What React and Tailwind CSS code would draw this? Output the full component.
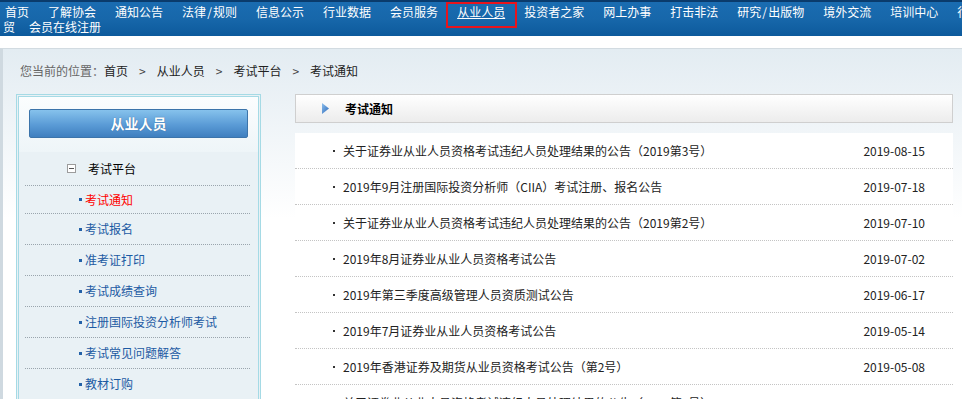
import React from 'react';

const NAV = ['首页', '了解协会', '通知公告', '法律/规则', '信息公示', '行业数据', '会员服务', '从业人员', '投资者之家', '网上办事', '打击非法', '研究/出版物', '境外交流', '培训中心', '行'];

const SIDE = [
  { label: '考试通知', active: true },
  { label: '考试报名' },
  { label: '准考证打印' },
  { label: '考试成绩查询' },
  { label: '注册国际投资分析师考试' },
  { label: '考试常见问题解答' },
  { label: '教材订购' },
  { label: '考试大纲' },
];

const NEWS = [
  ['关于证券业从业人员资格考试违纪人员处理结果的公告（2019第3号）', '2019-08-15'],
  ['2019年9月注册国际投资分析师（CIIA）考试注册、报名公告', '2019-07-18'],
  ['关于证券业从业人员资格考试违纪人员处理结果的公告（2019第2号）', '2019-07-10'],
  ['2019年8月证券业从业人员资格考试公告', '2019-07-02'],
  ['2019年第三季度高级管理人员资质测试公告', '2019-06-17'],
  ['2019年7月证券业从业人员资格考试公告', '2019-05-14'],
  ['2019年香港证券及期货从业员资格考试公告（第2号）', '2019-05-08'],
  ['关于证券业从业人员资格考试违纪人员处理结果的公告（2019第1号）', '2019-04-26'],
];

// nav label with the "/" kept at a fixed half-width, as in the bitmap font
function NavLabel({ text }) {
  const parts = text.split('/');
  if (parts.length === 1) return text;
  return (
    <>
      {parts[0]}
      <span className="inline-block w-[7px] text-center">/</span>
      {parts[1]}
    </>
  );
}

function TopNav() {
  return (
    <div className="h-[36px] overflow-hidden border-t-2 border-[#0a3b6c] bg-[linear-gradient(to_bottom,#1a6cb1_0%,#1767aa_50%,#0d5a9c_100%)] pt-[2px] text-[12px] leading-[15px] text-white">
      <div className="flex h-[15px] gap-[19px] pl-[5px] whitespace-nowrap">
        {NAV.map((n) => (
          <span key={n} className="relative">
            {n === '从业人员' ? (
              <>
                <span className="underline">{n}</span>
                <span className="absolute -top-[2px] -bottom-[9px] -left-[11px] -right-[12px] border-2 border-[#e8141c]" />
              </>
            ) : (
              <NavLabel text={n} />
            )}
          </span>
        ))}
      </div>
      <div className="flex h-[15px] gap-[14px] pl-[3px] whitespace-nowrap">
        <span>贸</span>
        <span>会员在线注册</span>
      </div>
    </div>
  );
}

function Sidebar() {
  return (
    <div className="w-[245px] shrink-0 border-[3px] border-double border-[#a5dae5] bg-[#e9f1f5]">
      <div className="bg-[linear-gradient(to_bottom,#fbfdfe,#eef5f8)] px-[10px] pt-[12px] pb-[14px]">
        <div className="flex h-[29px] items-center justify-center rounded-[2px] border border-[#3c74aa] bg-[linear-gradient(to_bottom,#86c2ec,#5a9bd6_55%,#3f7fbf)] text-[14px] font-bold text-white [text-shadow:0_0_1px_#2d5f93]">
          从业人员
        </div>
      </div>
      <div className="ml-[6px] mr-[8px]">
        <div className="flex h-[34px] items-center border-b border-dotted border-[#9aa5ad]">
          <span className="ml-[42px] flex h-[9px] w-[9px] items-center justify-center border border-[#9c9c9c] bg-white">
            <span className="h-px w-[5px] bg-[#555]" />
          </span>
          <span className="ml-[12px] text-[12px] text-black">考试平台</span>
        </div>
        {SIDE.map((s, i) => (
          <div
            key={s.label}
            className={`flex items-center border-b border-dotted border-[#9aa5ad] ${i === 0 ? 'h-[28px]' : 'h-[31px]'}`}
          >
            <span className="ml-[54px] h-[3px] w-[3px] bg-[#2361a8]" />
            <span className={`ml-[3px] text-[12px] ${s.active ? 'text-[#ff0000]' : 'text-[#1c5aa3]'}`}>{s.label}</span>
          </div>
        ))}
      </div>
    </div>
  );
}

function NewsList() {
  return (
    <div className="ml-[34px] mr-[9px] flex-1">
      <div className="flex h-[29px] items-center border border-[#cfcfcf] bg-[linear-gradient(to_bottom,#ffffff,#ececec)]">
        <svg width="7" height="11" viewBox="0 0 7 11" className="ml-[26px]">
          <defs>
            <linearGradient id="tri" x1="0" y1="0" x2="1" y2="1">
              <stop offset="0" stopColor="#8fc0ee" />
              <stop offset="1" stopColor="#2a68b8" />
            </linearGradient>
          </defs>
          <path d="M0 0 L7 5.5 L0 11 Z" fill="url(#tri)" />
        </svg>
        <span className="ml-[16px] text-[12px] font-bold text-black">考试通知</span>
      </div>
      <div className="mt-[10px] bg-white">
        {NEWS.map(([t, d]) => (
          <div key={t} className="flex h-[36px] items-center border-b border-dotted border-[#c4c4c4] text-[12px] text-[#222]">
            <span className="ml-[38px] h-[2px] w-[2px] bg-[#333]" />
            <span className="ml-[8px] flex-1">{t}</span>
            <span className="mr-[28px]">{d}</span>
          </div>
        ))}
      </div>
    </div>
  );
}

export default function App() {
  return (
    <div className="w-[962px] bg-white font-['SimSun','Noto_Sans_CJK_SC',sans-serif]">
      <TopNav />
      <div className="mt-[12px] border-t border-l-[3px] border-t-[#d2dbe1] border-l-[#cfd9e0] bg-[linear-gradient(to_bottom,#e3ecf2,#ffffff_170px)] pb-[20px]">
        <div className="flex h-[44px] items-center pl-[17px] text-[12px]">
          <span className="text-[#666]">您当前的位置：</span>
          <span className="text-[#222]">首页</span>
          <span className="mx-[11px] text-[#444]">&gt;</span>
          <span className="text-[#222]">从业人员</span>
          <span className="mx-[11px] text-[#444]">&gt;</span>
          <span className="text-[#222]">考试平台</span>
          <span className="mx-[11px] text-[#444]">&gt;</span>
          <span className="text-[#222]">考试通知</span>
        </div>
        <div className="mt-[1px] flex items-start pl-[13px]">
          <Sidebar />
          <NewsList />
        </div>
      </div>
    </div>
  );
}
